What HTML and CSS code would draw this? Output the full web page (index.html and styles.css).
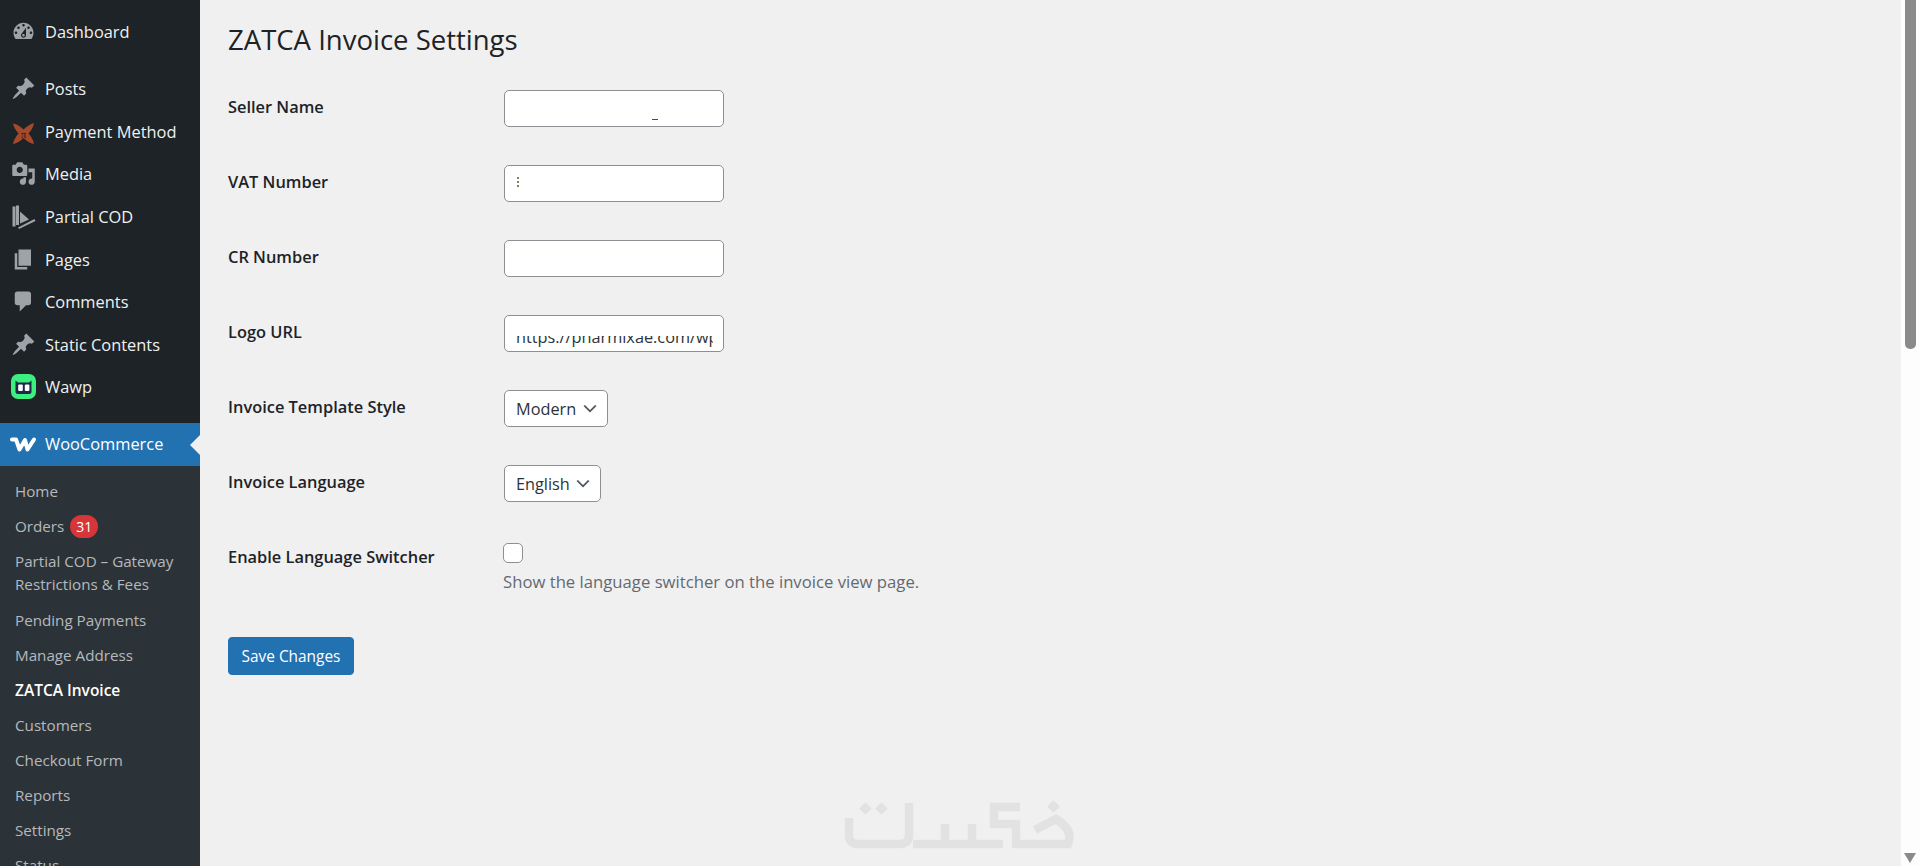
FILE: index.html
```html
<!DOCTYPE html>
<html lang="en">
<head>
<meta charset="utf-8">
<title>ZATCA Invoice Settings</title>
<link rel="stylesheet" href="styles.css">
</head>
<body>
<div class="app">
  <nav class="sidebar">
    <ul class="menu">
      <li class="item"><svg class="icon" viewBox="0 0 20 20"><path d="M3.76 16h12.48c1.1-1.37 1.76-3.11 1.76-5 0-4.42-3.58-8-8-8s-8 3.58-8 8c0 1.89.66 3.63 1.76 5zM10 4c.55 0 1 .45 1 1s-.45 1-1 1-1-.45-1-1 .45-1 1-1zM6 6c.55 0 1 .45 1 1s-.45 1-1 1-1-.45-1-1 .45-1 1-1zm8 0c.55 0 1 .45 1 1s-.45 1-1 1-1-.45-1-1 .45-1 1-1zm-5.37 5.55L12 7v6c0 1.1-.9 2-2 2s-2-.9-2-2c0-.57.24-1.08.63-1.45zM4 10c.55 0 1 .45 1 1s-.45 1-1 1-1-.45-1-1 .45-1 1-1zm12 0c.55 0 1 .45 1 1s-.45 1-1 1-1-.45-1-1 .45-1 1-1zm-5 3c0-.55-.45-1-1-1s-1 .45-1 1 .45 1 1 1 1-.45 1-1z"/></svg>Dashboard</li>
      <li class="sep"></li>
      <li class="item"><svg class="icon" viewBox="0 0 20 20"><path d="M10.44 3.02l1.82-1.82 6.36 6.35-1.83 1.82c-1.05-.68-2.48-.57-3.41.36l-.75.75c-.92.93-1.04 2.35-.35 3.41l-1.83 1.82-2.41-2.41-2.8 2.79c-.42.42-3.38 2.71-3.8 2.29s1.86-3.39 2.28-3.81l2.79-2.79L4.1 9.36l1.83-1.82c1.05.69 2.48.57 3.4-.36l.75-.75c.93-.92 1.05-2.35.36-3.41z"/></svg>Posts</li>
      <li class="item"><svg class="icon" viewBox="0 0 25 25"><g transform="translate(0 2)"><path class="star" d="M2 2.500C6 3 9 5.500 12.500 8.500 16 5.500 19 3 23 2 22.500 6 20 9.500 17.500 12.500 20 15.500 22.500 19 23 23 19 22.500 16 20 12.500 17 9 20 6 22.500 2 23 2.500 19 5 15.500 7.500 12.500 5 9.500 2.500 6 2 2.500Z"/><text class="pi" x="12.500" y="16.500" text-anchor="middle">π</text></g></svg>Payment Method</li>
      <li class="item"><svg class="icon" viewBox="0 0 20 20"><path d="M13 11V4c0-.55-.45-1-1-1h-1.670L9 1H5L3.670 3H2c-.55 0-1 .45-1 1v7c0 .55.45 1 1 1h10c.55 0 1-.45 1-1zM7 4.500c1.380 0 2.500 1.120 2.500 2.500S8.380 9.500 7 9.500 4.500 8.380 4.500 7 5.620 4.500 7 4.500zM14 6h5v10.500c0 1.380-1.120 2.500-2.500 2.500S14 17.880 14 16.500s1.120-2.500 2.500-2.500c.17 0 .34.02.5.05V9h-3V6zm-4 8.050V13h2v3.500c0 1.380-1.120 2.500-2.500 2.500S7 17.880 7 16.500 8.120 14 9.500 14c.17 0 .34.02.5.05z"/></svg>Media</li>
      <li class="item"><svg class="icon" viewBox="0 0 25 25"><path d="M1.500 2.500h3v20h-3zM5 1.500 H8 V21 H5zM9 7.500 18 15.500 9 19.500z"/><path d="M7 23.500 23.500 15 24.500 17 8 25z"/></svg>Partial COD</li>
      <li class="item"><svg class="icon" viewBox="0 0 20 20"><path d="M6 15V2h10v13H6zm-1 1h8v2H3V5h2v11z"/></svg>Pages</li>
      <li class="item"><svg class="icon" viewBox="0 0 20 20"><path d="M5 2h9c1.100 0 2 .9 2 2v7c0 1.100-.9 2-2 2h-2l-5 5v-5H5c-1.100 0-2-.9-2-2V4c0-1.100.9-2 2-2z"/></svg>Comments</li>
      <li class="item"><svg class="icon" viewBox="0 0 20 20"><path d="M10.44 3.02l1.82-1.82 6.36 6.35-1.83 1.82c-1.05-.68-2.48-.57-3.41.36l-.75.75c-.92.93-1.04 2.35-.35 3.41l-1.83 1.82-2.41-2.41-2.8 2.79c-.42.42-3.38 2.71-3.8 2.29s1.86-3.39 2.28-3.81l2.79-2.79L4.1 9.36l1.83-1.82c1.05.69 2.48.57 3.4-.36l.75-.75c.93-.92 1.05-2.35.36-3.41z"/></svg>Static Contents</li>
      <li class="item"><svg class="icon" viewBox="0 0 25 25"><rect class="wawp-bg" width="25" height="25" rx="7"/><path class="wawp-head" d="M4.500 6.500 7 8.500H18L20.500 6.500V17.500Q20.500 20 18 20H7Q4.500 20 4.500 17.500Z"/><rect class="wawp-eye" x="7.200" y="10.500" width="4.600" height="6.500" rx="1"/><rect class="wawp-eye" x="13.800" y="10.500" width="4.600" height="6.500" rx="1"/></svg>Wawp</li>
      <li class="sep"></li>
      <li class="item active"><svg class="icon" viewBox="0 0 25 25"><path class="woo" d="M1 8.500H5L8.500 18.500 14 9 16.500 18.500 23 8.500"/></svg>WooCommerce</li>
    </ul>
    <ul class="submenu">
      <li class="sub">Home</li>
      <li class="sub">Orders<span class="badge">31</span></li>
      <li class="sub">Partial COD – Gateway Restrictions &amp; Fees</li>
      <li class="sub">Pending Payments</li>
      <li class="sub">Manage Address</li>
      <li class="sub current">ZATCA Invoice</li>
      <li class="sub">Customers</li>
      <li class="sub">Checkout Form</li>
      <li class="sub">Reports</li>
      <li class="sub">Settings</li>
      <li class="sub">Status</li>
    </ul>
  </nav>

  <main class="main">
    <h1 class="title">ZATCA Invoice Settings</h1>
    <form class="form">
      <label class="label">Seller Name</label>
      <div class="field"><input class="input" type="text"><span class="speck dash"></span></div>

      <label class="label">VAT Number</label>
      <div class="field"><input class="input" type="text"><span class="speck digit"></span></div>

      <label class="label">CR Number</label>
      <div class="field"><input class="input" type="text"></div>

      <label class="label">Logo URL</label>
      <div class="field"><input class="input url" type="text" value="https://pharmixae.com/wp-content/uploads/logo.png"><span class="mask"></span></div>

      <label class="label">Invoice Template Style</label>
      <div class="field"><select class="select modern"><option>Modern</option></select></div>

      <label class="label">Invoice Language</label>
      <div class="field"><select class="select english"><option>English</option></select></div>

      <label class="label">Enable Language Switcher</label>
      <div class="field check">
        <input class="checkbox" type="checkbox">
        <p class="desc">Show the language switcher on the invoice view page.</p>
      </div>
    </form>
    <button class="save" type="button">Save Changes</button>

    <svg class="watermark" viewBox="0 0 280 86" aria-hidden="true">
      <g class="wm-line">
        <path d="M29 38V55Q29 64 38 64H80Q89 64 89 55V23"/>
        <path d="M93 64H183"/>
        <path d="M125 44V64"/>
        <path d="M152 44V64"/>
        <path d="M174 23V44H196V68M170 27H200"/>
        <path d="M196 64H248Q254 50 236 39L215 50"/>
      </g>
      <g class="wm-dot">
        <rect x="41" y="24" width="9" height="9" transform="rotate(45 45.500 28.500)"/>
        <rect x="57" y="24" width="9" height="9" transform="rotate(45 61.500 28.500)"/>
        <rect x="229" y="22" width="9" height="9" transform="rotate(45 233.500 26.500)"/>
      </g>
    </svg>
  </main>

  <div class="scrollbar">
    <span class="thumb"></span>
    <span class="arrow"></span>
  </div>
</div>
</body>
</html>
```
FILE: styles.css
```css
* { box-sizing: border-box; }
html, body { margin: 0; height: 100%; overflow: hidden; }
body { font-family: "Open Sans", "Noto Sans", sans-serif; background: #f0f0f1; color: #1d2327; }
ul { list-style: none; margin: 0; padding: 0; }
.app { display: flex; height: 866px; overflow: hidden; }

.sidebar { width: 200px; flex: none; background: #1d2327; height: 866px; overflow: hidden; }
.menu { padding-top: 11px; }
.item { position: relative; display: flex; align-items: center; gap: 9.5px; height: 42.6px; padding-left: 10.5px; padding-bottom: 1px; color: #f0f0f1; font-size: 16.4px; }
.sep { height: 14.4px; }
.icon { width: 25px; height: 25px; flex: none; fill: #9ea3a8; overflow: visible; }
.star { fill: #a34a2c; }
.pi { font: 11px "Liberation Serif", serif; fill: #2a1a16; }
.wawp-bg { fill: #3bf07e; }
.wawp-head { fill: #1c2a4a; }
.wawp-eye { fill: #fff; }
.woo { fill: none; stroke: #fff; stroke-width: 4; stroke-linejoin: round; stroke-linecap: round; }
.active { background: #2271b1; color: #fff; }
.active::after { content: ""; position: absolute; right: 0; top: 11.5px; border: 10px solid transparent; border-left-width: 0; border-right-color: #f0f0f1; }

.submenu { background: #2c3338; padding-top: 8.5px; padding-bottom: 9px; }
.sub { padding: 6.05px 10px 6.05px 15px; font-size: 15.2px; line-height: 23px; color: #b5b9bd; }
.current { color: #fff; font-weight: 600; font-size: 15.5px; }
.badge { display: inline-block; vertical-align: top; margin-left: 6px; width: 28px; height: 23px; border-radius: 12px; background: #d63638; color: #fff; font-size: 14px; line-height: 23px; text-align: center; }

.main { position: relative; flex: 1; min-width: 0; padding-left: 28px; }
.title { margin: 0; padding-top: 22px; height: 90px; font-size: 27.5px; line-height: 36px; font-weight: 400; color: #1d2327; }
.form { display: grid; grid-template-columns: 276px 1fr; row-gap: 38px; }
.label { font-size: 16.4px; font-weight: 600; line-height: 22px; padding-top: 6px; color: #1d2327; }
.field { position: relative; min-height: 37px; }
.input { display: block; width: 220px; height: 37px; padding: 0 10px 0 11px; border: 1px solid #8c8f94; border-radius: 5px; background: #fff; font: 16.3px "Open Sans", sans-serif; color: #2c3338; outline: 0; }
.url { padding-top: 6px; }
.mask { position: absolute; left: 5px; top: 2px; width: 210px; height: 19px; background: #fff; }
.speck { position: absolute; background: #4a4a4a; }
.dash { left: 148px; top: 29px; width: 6px; height: 1px; }
.digit { left: 13px; top: 12px; width: 2px; height: 11px; background: repeating-linear-gradient(#8a7a6a 0 2px, #fff 2px 4px); }
.select { display: block; height: 37px; padding: 0 30px 0 11px; border: 1px solid #8c8f94; border-radius: 5px; font: 16.3px "Open Sans", sans-serif; color: #2c3338; appearance: none; background: #fff url("data:image/svg+xml,%3Csvg xmlns='http://www.w3.org/2000/svg' viewBox='0 0 20 20'%3E%3Cpath fill='%2350575e' d='M5 6l5 5 5-5 1.500 1-6.500 6.500L3.500 7l1.500-1z'/%3E%3C/svg%3E") no-repeat right 7px center / 20px 20px; }
.modern { width: 104px; }
.english { width: 97px; }
.check { padding-top: 3px; }
.checkbox { display: block; appearance: none; width: 20px; height: 20px; margin: 0 0 0 -1px; border: 1px solid #8c8f94; border-radius: 5px; background: #fff; }
.desc { margin: 7px 0 0 -1px; font-size: 16.7px; line-height: 24px; color: #646970; }
.save { display: block; margin-top: 43px; width: 126px; height: 38px; padding: 0; border: 1px solid #2271b1; border-radius: 4px; background: #2271b1; color: #fff; font: 15.4px "Open Sans", sans-serif; }

.watermark { position: absolute; left: 620px; top: 780px; width: 280px; height: 86px; }
.wm-line { fill: none; stroke: #e2e2e2; stroke-width: 8.5; }
.wm-dot { fill: #e2e2e2; }

.scrollbar { position: relative; width: 19px; flex: none; background: #fdfdfd; }
.thumb { display: block; margin-left: 4px; width: 11px; height: 349px; background: #8a8a8a; border-radius: 0 0 5px 5px; }
.arrow { position: absolute; left: 3px; bottom: 3px; border: 6.500px solid transparent; border-bottom-width: 0; border-top: 10px solid #8a8a8a; }
```
